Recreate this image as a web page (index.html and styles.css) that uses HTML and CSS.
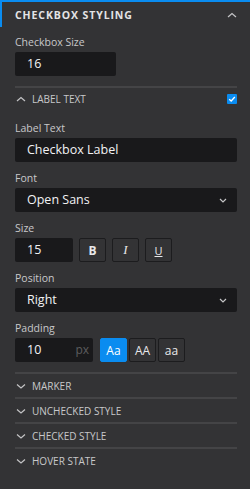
FILE: index.html
```html
<!DOCTYPE html>
<html>
<head>
    <title>Checkbox styling</title>
    <meta charset="UTF-8">
    <meta name="viewport" content="width=device-width, initial-scale=1">
    <link rel="stylesheet" href="styles.css">
</head>
<body>
    <div class="panel">
        <div class="panel-head">
            <span class="panel-title">Checkbox Styling</span>
            <svg class="chev" width="10" height="6" viewBox="0 0 10 6"><path d="M1 5 L5 1.5 L9 5" /></svg>
        </div>
        <div class="panel-body">
            <div class="field">
                <label>Checkbox Size</label>
                <div class="input small-input">16</div>
            </div>

            <div class="sep after-field"></div>
            <div class="sub-head">
                <svg class="chev" width="10" height="6" viewBox="0 0 10 6"><path d="M1 5 L5 1.5 L9 5" /></svg>
                <span>Label Text</span>
                <span class="check">
                    <svg width="10" height="10" viewBox="0 0 10 10"><path d="M2.2 5.2 L4.2 7 L7.8 3" /></svg>
                </span>
            </div>

            <div class="field">
                <label>Label Text</label>
                <div class="input">Checkbox Label</div>
            </div>
            <div class="field">
                <label>Font</label>
                <div class="input select">Open Sans
                    <svg class="chev" width="8" height="5" viewBox="0 0 8 5"><path d="M1 1 L4 4 L7 1" /></svg>
                </div>
            </div>
            <div class="field">
                <label>Size</label>
                <div class="row">
                    <div class="input size-input">15</div>
                    <div class="btn bold">B</div>
                    <div class="btn italic">I</div>
                    <div class="btn under">U</div>
                </div>
            </div>
            <div class="field">
                <label>Position</label>
                <div class="input select">Right
                    <svg class="chev" width="8" height="5" viewBox="0 0 8 5"><path d="M1 1 L4 4 L7 1" /></svg>
                </div>
            </div>
            <div class="field">
                <label>Padding</label>
                <div class="row">
                    <div class="input pad-input">10<span class="unit">px</span></div>
                    <div class="case-group">
                        <div class="btn case active">Aa</div>
                        <div class="btn case">AA</div>
                        <div class="btn case">aa</div>
                    </div>
                </div>
            </div>

            <div class="sep after-field"></div>
            <div class="sub-head closed">
                <svg class="chev" width="10" height="6" viewBox="0 0 10 6"><path d="M1 1.5 L5 5 L9 1.5" /></svg>
                <span>Marker</span>
            </div>
            <div class="sep"></div>
            <div class="sub-head closed">
                <svg class="chev" width="10" height="6" viewBox="0 0 10 6"><path d="M1 1.5 L5 5 L9 1.5" /></svg>
                <span>Unchecked Style</span>
            </div>
            <div class="sep"></div>
            <div class="sub-head closed">
                <svg class="chev" width="10" height="6" viewBox="0 0 10 6"><path d="M1 1.5 L5 5 L9 1.5" /></svg>
                <span>Checked Style</span>
            </div>
            <div class="sep"></div>
            <div class="sub-head closed">
                <svg class="chev" width="10" height="6" viewBox="0 0 10 6"><path d="M1 1.5 L5 5 L9 1.5" /></svg>
                <span>Hover State</span>
            </div>
        </div>
    </div>
</body>
</html>
```

FILE: styles.css
```css
body, html {
    margin: 0;
    padding: 0;
    background-color: #333335;
    font-family: "Open Sans", "Noto Sans", sans-serif;
    color: #d2d2d4;
}

.panel {
    width: 250px;
    height: 489px;
    box-sizing: border-box;
    border-top: 2px solid #0a8cf0;
    background-color: #333335;
}

.panel-head {
    height: 25px;
    display: flex;
    align-items: center;
    justify-content: space-between;
    border-left: 2px solid #0a8cf0;
    padding: 0 13px 0 13px;
}

.panel-title {
    font-size: 10.5px;
    font-weight: bold;
    text-transform: uppercase;
    letter-spacing: 0.9px;
    color: #e4e4e6;
}

.chev {
    fill: none;
    stroke: #c4c4c6;
    stroke-width: 1.2;
}

.panel-body {
    padding: 7px 13px 0 15px;
}

.field + .field {
    margin-top: 8px;
}

label {
    display: block;
    height: 16px;
    line-height: 16px;
    font-size: 10.5px;
    color: #c8c8ca;
    margin-bottom: 2px;
}

.input {
    height: 24px;
    line-height: 24px;
    box-sizing: border-box;
    background-color: #19191b;
    border-radius: 2px;
    padding: 0 12px;
    font-size: 12.5px;
    color: #f2f2f4;
}

.small-input {
    width: 101px;
}

.select {
    display: flex;
    align-items: center;
    justify-content: space-between;
    padding-right: 10px;
}

.row {
    display: flex;
    align-items: center;
}

.size-input {
    width: 58px;
    margin-right: 6px;
}

.btn {
    width: 27px;
    height: 24px;
    box-sizing: border-box;
    border: 1px solid #1c1c1e;
    border-radius: 2px;
    display: flex;
    align-items: center;
    justify-content: center;
    font-size: 12px;
    color: #e8e8ea;
}

.btn + .btn {
    margin-left: 6px;
}

.bold {
    font-weight: bold;
}

.italic {
    font-family: "Liberation Serif", serif;
    font-style: italic;
    font-size: 13px;
}

.under {
    text-decoration: underline;
    font-size: 11px;
}

.pad-input {
    width: 78px;
    display: flex;
    justify-content: space-between;
    margin-right: 7px;
}

.unit {
    color: #5c5c5e;
    font-size: 12px;
    margin-right: -8px;
}

.case-group {
    display: flex;
}

.case-group .btn + .btn {
    margin-left: 2px;
}

.case {
    font-size: 12px;
}

.case.active {
    background-color: #0a8cf0;
    border-color: #0a8cf0;
    color: #ffffff;
}

.sep {
    height: 2px;
    background-color: #444446;
}

.sep.after-field {
    margin-top: 10px;
}

.sub-head {
    height: 22px;
    display: flex;
    align-items: center;
    font-size: 10px;
    text-transform: uppercase;
    color: #c8c8ca;
}

.sub-head.closed {
    height: 23px;
}

.sub-head .chev {
    margin: 0 6px 0 1px;
}

.check {
    margin-left: auto;
    width: 10px;
    height: 10px;
    background-color: #0a8cf0;
    border-radius: 1px;
    display: flex;
}

.check path {
    fill: none;
    stroke: #ffffff;
    stroke-width: 1.3;
}

.sub-head + .field {
    margin-top: 10px;
}
```
